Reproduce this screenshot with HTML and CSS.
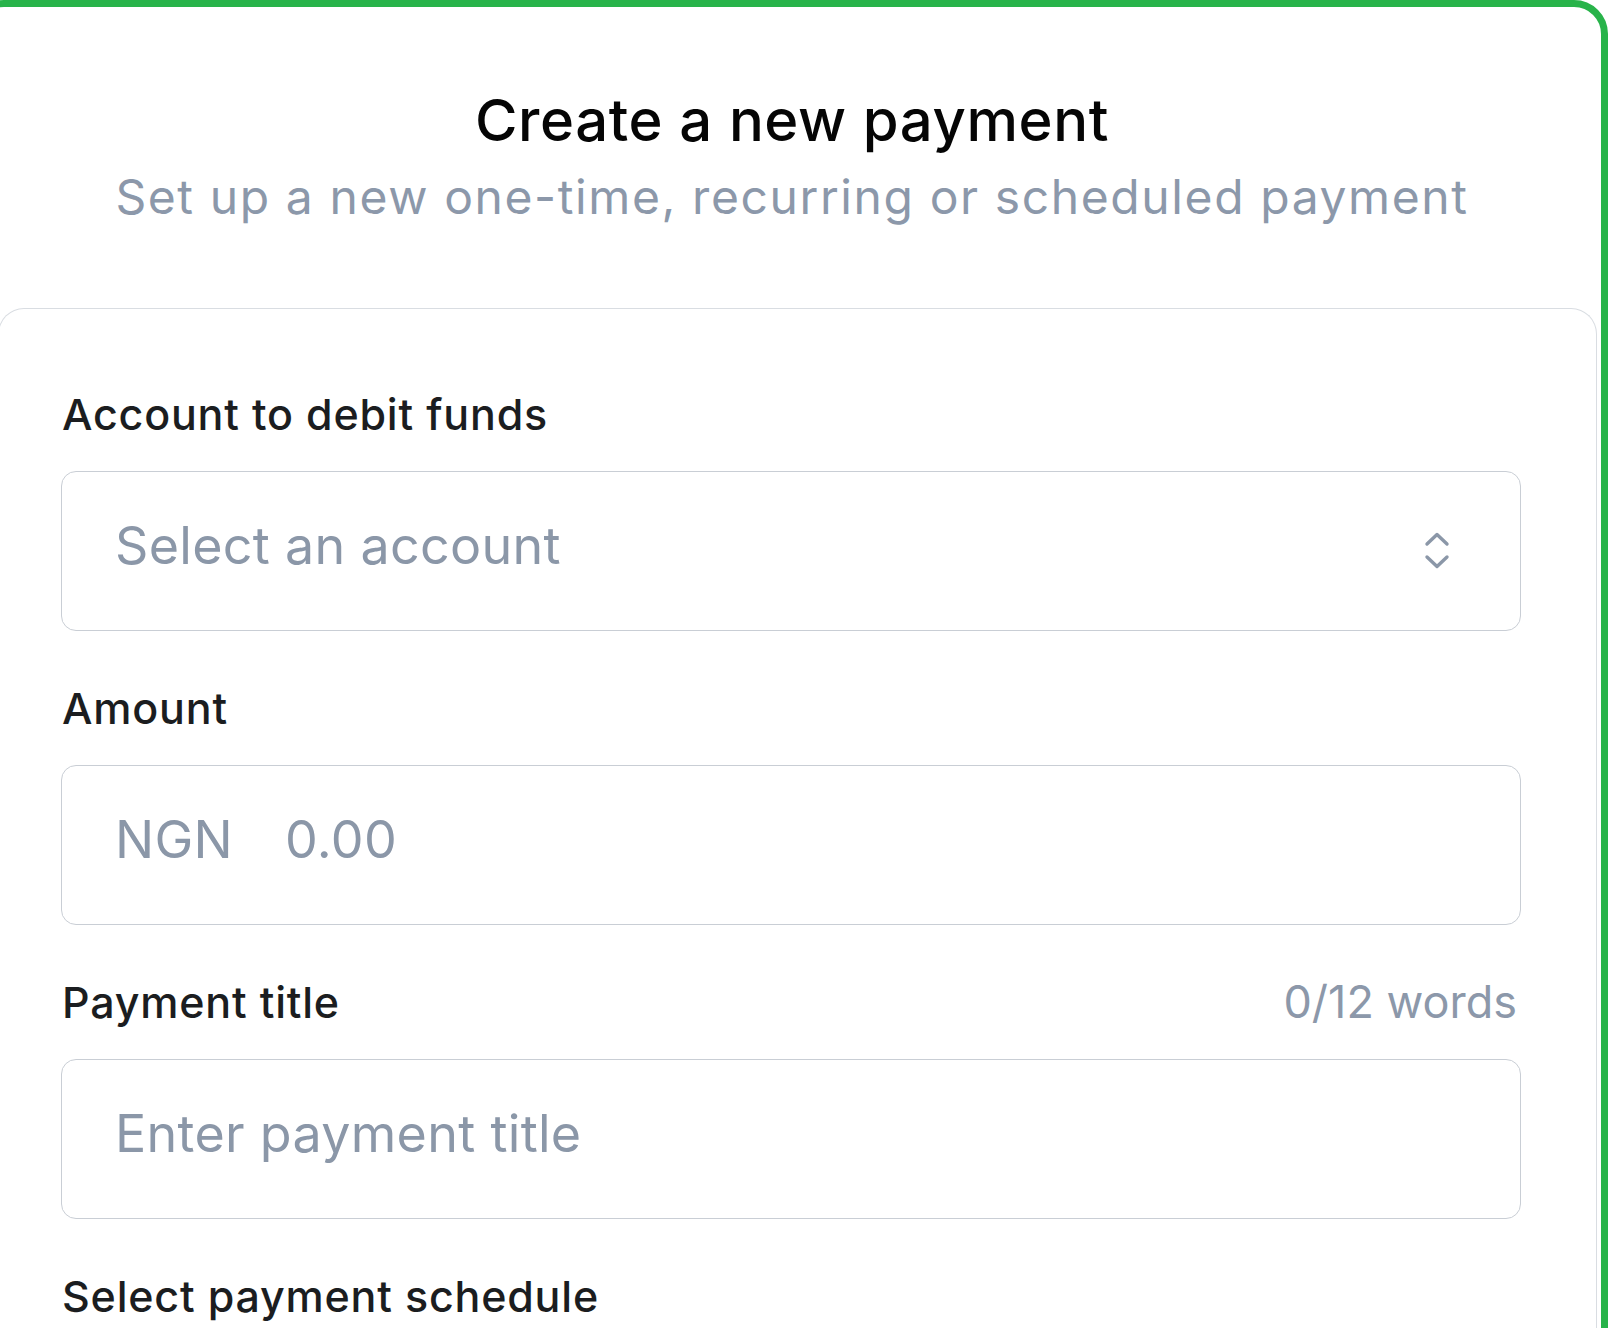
FILE: index.html
```html
<!DOCTYPE html>
<html lang="en">
<head>
    <meta charset="UTF-8">
    <meta name="viewport" content="width=device-width, initial-scale=1.0">
    <title>Create a new payment</title>
    <link rel="stylesheet" href="styles.css">
</head>
<body>
    <div class="frame">
        <div class="header">
            <h1 class="title">Create a new payment</h1>
            <p class="subtitle">Set up a new one-time, recurring or scheduled payment</p>
        </div>

        <form class="card">
            <div class="field">
                <label class="label" for="account">Account to debit funds</label>
                <div class="box select" id="account">
                    <span class="placeholder">Select an account</span>
                    <svg class="chevrons" width="26" height="38" viewBox="0 0 26 38" fill="none" stroke="#8b97a8" stroke-width="3.4" stroke-linecap="round" stroke-linejoin="round">
                        <path d="M3 12 L13 2.5 L23 12"/>
                        <path d="M3 25 L13 34.5 L23 25"/>
                    </svg>
                </div>
            </div>

            <div class="field">
                <label class="label" for="amount">Amount</label>
                <div class="box" id="amount">
                    <span class="placeholder currency">NGN</span>
                    <span class="placeholder">0.00</span>
                </div>
            </div>

            <div class="field">
                <div class="label-row">
                    <label class="label" for="ptitle">Payment title</label>
                    <span class="counter">0/12 words</span>
                </div>
                <div class="box" id="ptitle">
                    <span class="placeholder">Enter payment title</span>
                </div>
            </div>

            <div class="field">
                <label class="label">Select payment schedule</label>
            </div>
        </form>
    </div>
</body>
</html>
```

FILE: styles.css
```css
body {
    margin: 0;
    font-family: Inter, "Noto Sans", sans-serif;
    background: #fff;
    overflow: hidden;
    height: 100vh;
}
.frame {
    box-sizing: border-box;
    width: calc(100% + 30px);
    margin-left: -30px;
    min-height: 1500px;
    border: 7px solid #28b34a;
    border-radius: 34px;
    background: #fff;
}
.header {
    text-align: center;
    padding: 78px 0 82px 6px;
}
.title {
    margin: 0;
    font-size: 58px;
    line-height: 70px;
    font-weight: 500;
    letter-spacing: 0.6px;
    color: #050505;
}
.subtitle {
    margin: 13px 0 0;
    font-size: 48px;
    line-height: 58px;
    font-weight: 400;
    letter-spacing: 1.6px;
    color: #8c98aa;
}
.card {
    margin: 0 4px 0 21px;
    padding: 79px 75px 0 62px;
    border: 1.5px solid #d9dde2;
    border-bottom: none;
    border-radius: 26px 26px 0 0;
    min-height: 1200px;
}
.field {
    display: flex;
    flex-direction: column;
    margin-bottom: 51px;
}
.label-row {
    display: flex;
    justify-content: space-between;
    align-items: baseline;
}
.label {
    padding-left: 1px;
    font-size: 43px;
    line-height: 52px;
    font-weight: 500;
    letter-spacing: 0.8px;
    color: #1b1d20;
}
.counter {
    font-size: 45px;
    line-height: 52px;
    color: #8c98aa;
    margin-right: 4px;
}
.box {
    margin-top: 31px;
    box-sizing: border-box;
    height: 160px;
    display: flex;
    align-items: center;
    padding: 0 70px 10px 53px;
    border: 1.5px solid #c9ced5;
    border-radius: 15px;
}
.placeholder {
    font-size: 52px;
    line-height: 62px;
    letter-spacing: 0.3px;
    color: #8b97a8;
}
.currency {
    margin-right: 52px;
}
.select {
    justify-content: space-between;
}
.chevrons {
    margin-top: 10px;
}
```
